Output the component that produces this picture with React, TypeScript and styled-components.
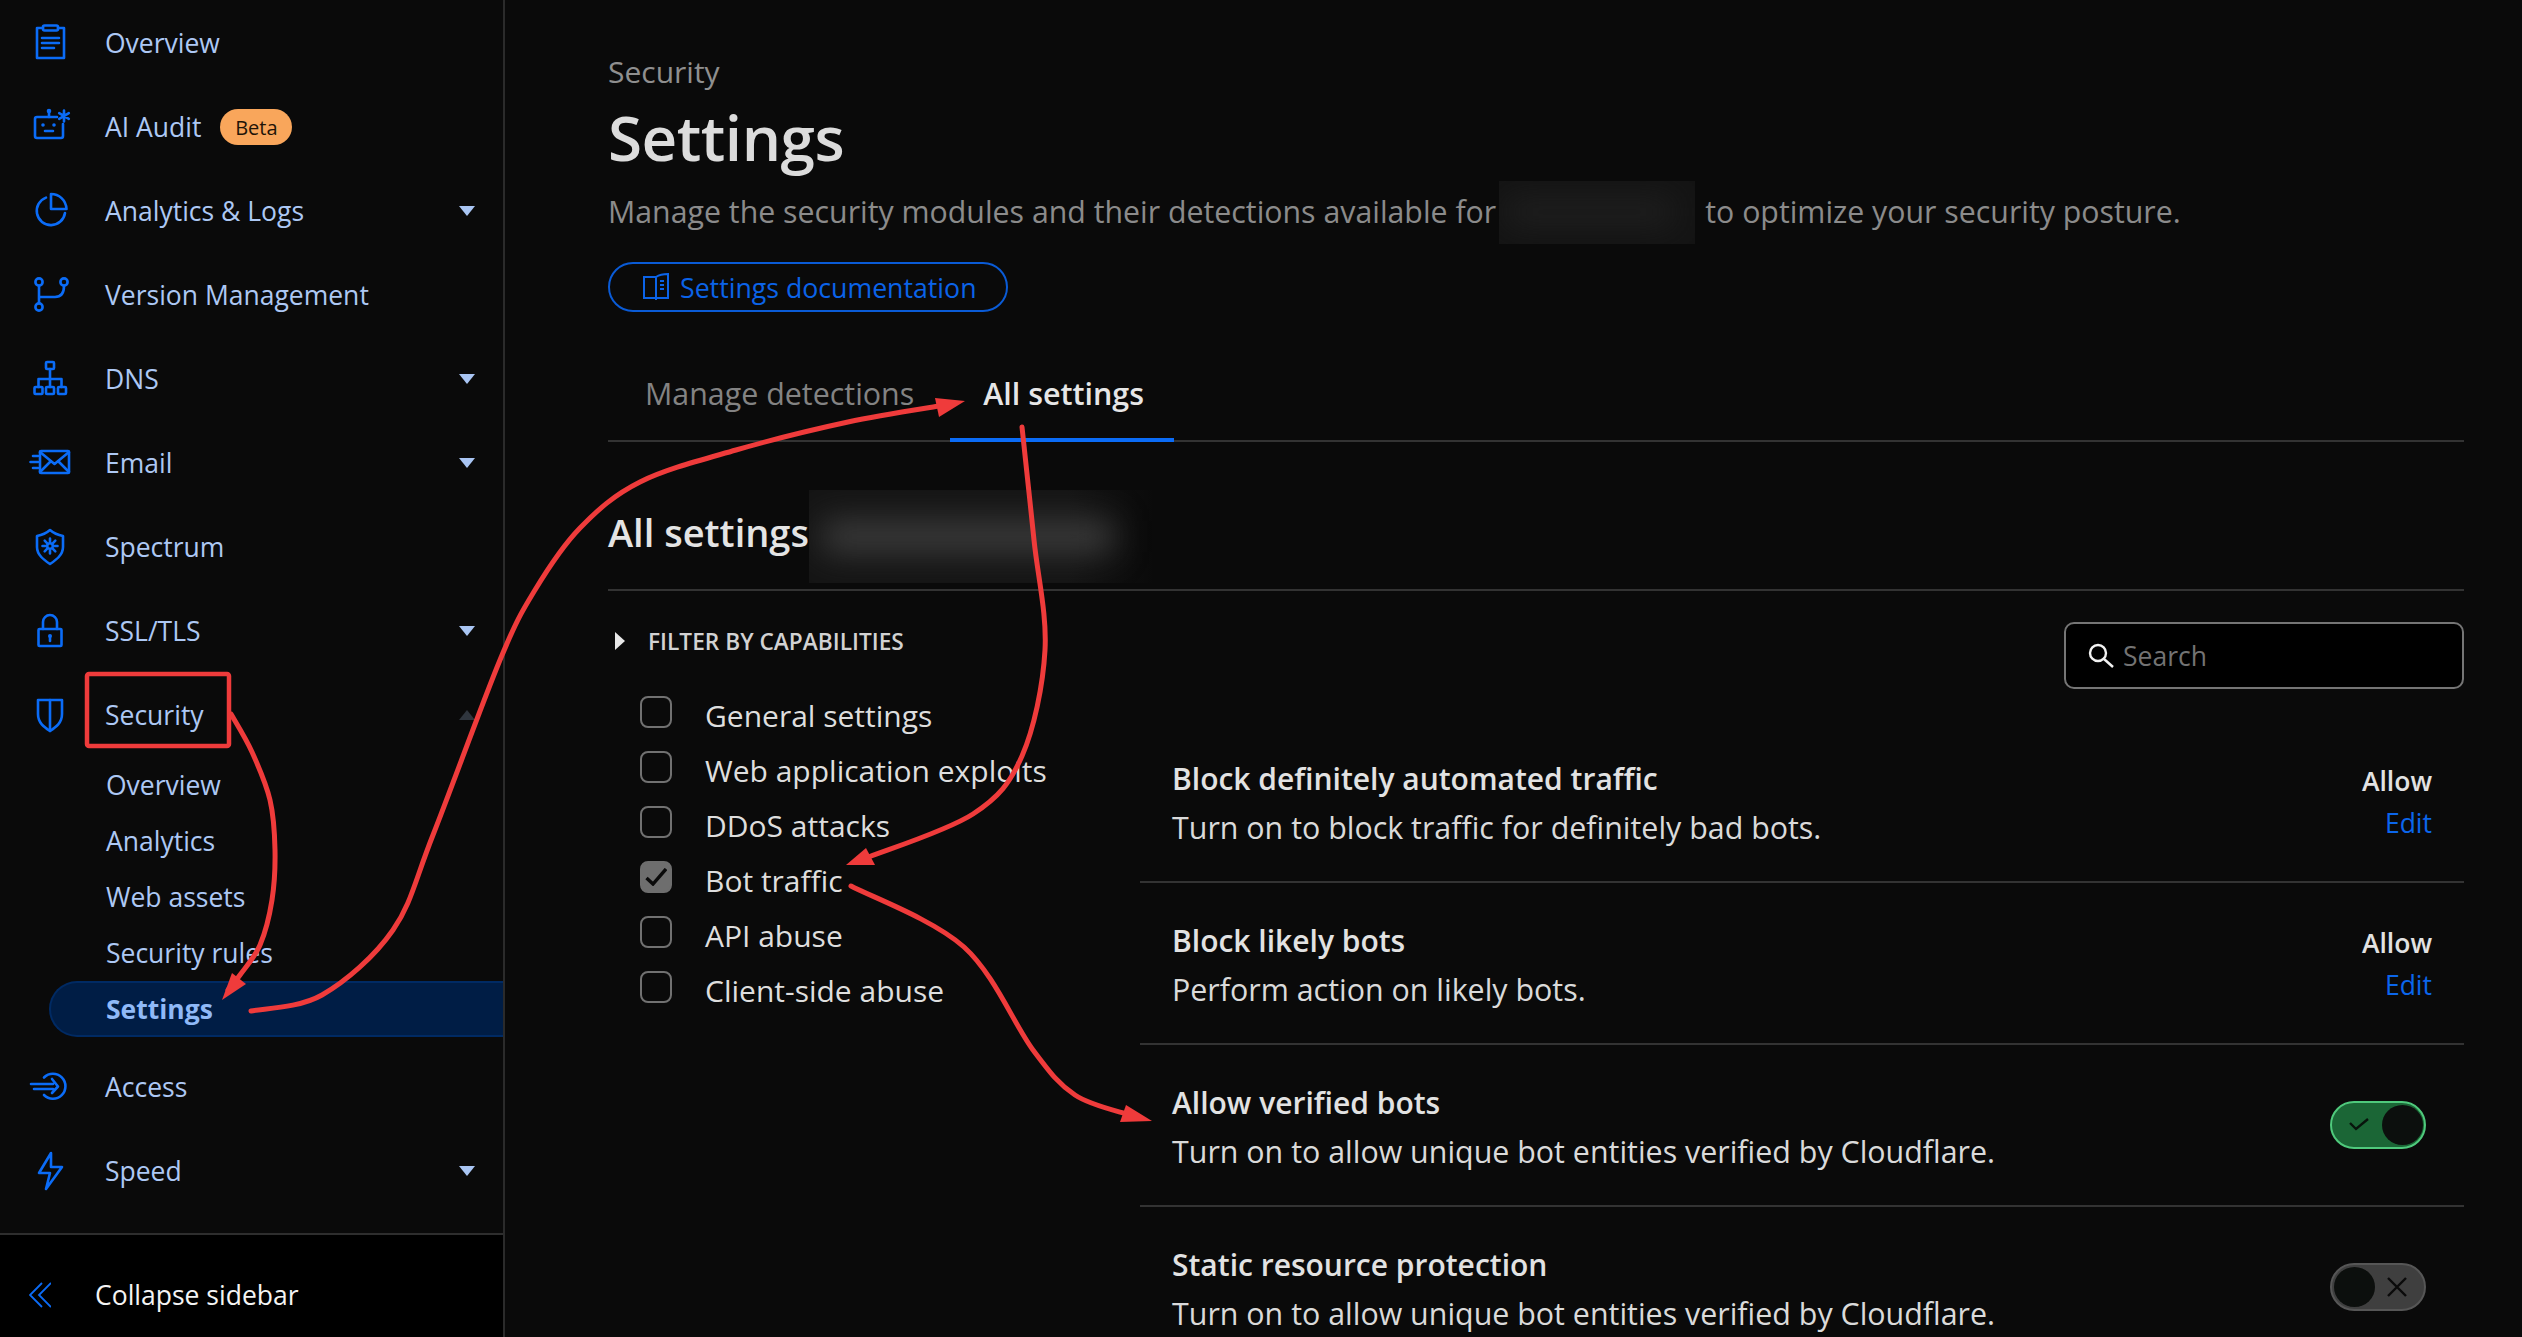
import React from 'react';
import styled, { createGlobalStyle } from 'styled-components';

const Global = createGlobalStyle`
  html, body { margin: 0; padding: 0; background: #0a0a0a; }
  body { font-family: "Open Sans", "Noto Sans", sans-serif; }
  * { box-sizing: border-box; }
`;

const Page = styled.div`
  position: relative;
  width: 2522px;
  height: 1337px;
  display: flex;
  overflow: hidden;
  background: #0a0a0a;
`;

const Sidebar = styled.aside`
  width: 505px;
  flex: none;
  height: 100%;
  display: flex;
  flex-direction: column;
  border-right: 2px solid #2b2b2b;
  background: #0a0a0a;
`;

const NavList = styled.nav`
  flex: 1;
  padding-top: 1px;
  border-bottom: 2px solid #2e2e2e;
`;

const NavRow = styled.div`
  height: 84px;
  display: flex;
  align-items: center;
  color: #adc8f4;
  font-size: 26.5px;
`;

const IconSlot = styled.span`
  width: 40px;
  height: 40px;
  margin-left: 30px;
  margin-right: 35px;
  flex: none;
  color: #0b6cf7;
  display: block;
  svg { display: block; overflow: visible; }
`;

const Badge = styled.span`
  margin-left: 19px;
  width: 72px;
  height: 36px;
  border-radius: 18px;
  background: #f9a65b;
  color: #1f1408;
  font-size: 20px;
  display: flex;
  align-items: center;
  justify-content: center;
`;

const Caret = styled.span<{ $up?: boolean }>`
  margin-left: auto;
  margin-right: 28px;
  width: 0;
  height: 0;
  border-left: 8px solid transparent;
  border-right: 8px solid transparent;
  ${p => p.$up
    ? 'border-bottom: 10px solid #2f353d;'
    : 'border-top: 10px solid #a9c5f3;'}
`;

const SubList = styled.div`
  margin-bottom: 8px;
`;

const SubItem = styled.div<{ $active?: boolean }>`
  height: 56px;
  margin-left: 49px;
  padding-left: 55px;
  display: flex;
  align-items: center;
  font-size: 26.5px;
  color: ${p => (p.$active ? '#8fb9f7' : '#adc8f4')};
  font-weight: ${p => (p.$active ? 700 : 400)};
  background: ${p => (p.$active ? '#001d45' : 'transparent')};
  border: ${p => (p.$active ? '2px solid #002a63' : '2px solid transparent')};
  border-right: none;
  border-radius: ${p => (p.$active ? '28px 0 0 28px' : '0')};
`;

const CollapseBar = styled.div`
  height: 102px;
  flex: none;
  background: #000;
  color: #f4f4f4;
  font-size: 26.5px;
  display: flex;
  align-items: center;
  padding: 18px 0 0 29px;
  gap: 44px;
`;

const Main = styled.main`
  flex: 1;
  min-width: 0;
  padding: 52px 58px 0 103px;
`;

const Crumb = styled.div`
  font-size: 30px;
  line-height: 40px;
  color: #8f8f8f;
`;

const Title = styled.h1`
  margin: 9px 0 0;
  font-size: 62px;
  line-height: 72px;
  font-weight: 600;
  color: #dcdcdc;
  letter-spacing: -0.5px;
`;

const Lead = styled.p`
  margin: 17px 0 0;
  font-size: 30.3px;
  line-height: 44px;
  color: #8b8b8b;
  display: flex;
  align-items: center;
  white-space: nowrap;
`;

const Redacted = styled.span<{ $w: number; $h: number; $base: string; $tone: string }>`
  display: inline-block;
  flex: none;
  position: relative;
  overflow: hidden;
  width: ${p => p.$w}px;
  height: ${p => p.$h}px;
  background: ${p => p.$base};
  &::after {
    content: '';
    position: absolute;
    left: 4%;
    right: 12%;
    top: 32%;
    bottom: 32%;
    background: ${p => p.$tone};
    filter: blur(16px);
  }
`;

const LeadRedacted = styled(Redacted)`
  margin: -10px 10px -10px 3px;
`;

const DocsButton = styled.a`
  margin-top: 28px;
  width: 400px;
  height: 50px;
  border: 2px solid #0a5bd6;
  border-radius: 25px;
  display: flex;
  align-items: center;
  padding-left: 33px;
  gap: 11px;
  color: #0b63e8;
  font-size: 26.7px;
`;

const Tabs = styled.div`
  margin-top: 50px;
  display: flex;
  border-bottom: 2px solid #333;
  height: 80px;
`;

const Tab = styled.div<{ $active?: boolean }>`
  height: 80px;
  display: flex;
  align-items: center;
  padding: 0 30px 14px 33px;
  font-size: 30.4px;
  font-weight: ${p => (p.$active ? 600 : 400)};
  color: ${p => (p.$active ? '#e6e6e6' : '#838383')};
  border-bottom: 4px solid ${p => (p.$active ? '#0b6cf7' : 'transparent')};
  &:first-child { padding-left: 37px; padding-right: 36px; }
`;

const SectionHead = styled.div`
  height: 149px;
  padding: 48px 0 0;
  border-bottom: 2px solid #333;
  display: flex;
  align-items: flex-start;
`;

const SectionTitle = styled.h2`
  margin: 16px 0 0;
  font-size: 38px;
  line-height: 52px;
  font-weight: 600;
  color: #e4e4e4;
  white-space: nowrap;
`;

const Columns = styled.div`
  display: flex;
`;

const FilterCol = styled.div`
  width: 532px;
  flex: none;
  padding-top: 39px;
`;

const FilterHead = styled.div`
  display: flex;
  align-items: center;
  height: 22px;
  color: #d2d2d2;
  font-size: 22.7px;
  font-weight: 600;
  text-transform: uppercase;
  padding-left: 7px;
`;

const FilterArrow = styled.span`
  width: 0;
  height: 0;
  border-top: 9px solid transparent;
  border-bottom: 9px solid transparent;
  border-left: 10px solid #e8e8e8;
  margin-right: 23px;
`;

const CheckList = styled.div`
  margin-top: 44px;
  padding-left: 32px;
  display: flex;
  flex-direction: column;
`;

const CheckRow = styled.label`
  height: 55px;
  display: flex;
  align-items: flex-start;
  gap: 33px;
  color: #dedede;
  font-size: 30px;
  line-height: 40px;
`;

const Box = styled.span<{ $on?: boolean }>`
  width: 32px;
  height: 32px;
  flex: none;
  border-radius: 8px;
  border: 2px solid ${p => (p.$on ? '#6e6e6e' : '#717171')};
  background: ${p => (p.$on ? '#6e6e6e' : 'transparent')};
  display: flex;
  align-items: center;
  justify-content: center;
`;

const ListCol = styled.div`
  flex: 1;
  min-width: 0;
`;

const SearchRow = styled.div`
  display: flex;
  justify-content: flex-end;
  padding-top: 31px;
  height: 130px;
`;

const SearchBox = styled.div`
  width: 400px;
  height: 67px;
  background: #000;
  border: 2px solid #757575;
  border-radius: 10px;
  display: flex;
  align-items: center;
  padding-left: 21px;
  gap: 8px;
  color: #737373;
  font-size: 26.5px;
`;

const SettingRow = styled.div`
  height: 162px;
  border-bottom: 2px solid #333;
  padding: 0 32px;
  display: flex;
  align-items: center;
  justify-content: space-between;
`;

const SettingText = styled.div`
  display: flex;
  flex-direction: column;
  gap: 7px;
  margin-top: 5px;
`;

const SettingTitle = styled.div`
  font-size: 30px;
  line-height: 42px;
  font-weight: 600;
  color: #e2e2e2;
`;

const SettingDesc = styled.div`
  font-size: 30.4px;
  line-height: 42px;
  color: #dadada;
`;

const ActionCol = styled.div`
  display: flex;
  flex-direction: column;
  align-items: flex-end;
  gap: 6px;
  margin-top: 2px;
  font-size: 26.5px;
  line-height: 36px;
`;

const ActionValue = styled.span`
  font-weight: 600;
  color: #e2e2e2;
`;

const ActionLink = styled.a`
  color: #0b66ec;
`;

const Toggle = styled.span<{ $on?: boolean }>`
  width: 96px;
  height: 48px;
  margin-right: 6px;
  flex: none;
  position: relative;
  border-radius: 24px;
  background: ${p => (p.$on ? '#1b6636' : '#3f3f3f')};
  border: 2px solid ${p => (p.$on ? '#4fc97c' : '#565656')};
  display: block;
  svg { position: absolute; top: 11px; left: ${p => (p.$on ? '16px' : '54px')}; }
`;

const Knob = styled.span<{ $on?: boolean }>`
  position: absolute;
  top: 2px;
  ${p => (p.$on ? 'right: 1px;' : 'left: 2px;')}
  width: 41px;
  height: 40px;
  border-radius: 50%;
  background: #0c0f0d;
`;

const Annotations = styled.svg`
  position: absolute;
  left: 0;
  top: 0;
  width: 2522px;
  height: 1337px;
  pointer-events: none;
`;

const S = { fill: 'none', stroke: 'currentColor', strokeWidth: 2.6, strokeLinecap: 'round' as const, strokeLinejoin: 'round' as const };

const Svg = ({ children }: { children: React.ReactNode }) => (
  <svg width="40" height="40" viewBox="0 0 40 40" {...S}>{children}</svg>
);

const icons: Record<string, React.ReactNode> = {
  overview: <Svg><path d="M13 5H7v30h27V5h-6" /><rect x="13" y="2.5" width="15" height="5" rx="1.5" /><path d="M12 15h17M12 20h17M12 25h12" /></Svg>,
  audit: <Svg><path d="M27 10H7a2 2 0 0 0-2 2v17a2 2 0 0 0 2 2h24a2 2 0 0 0 2-2V17" /><circle cx="19" cy="4" r="2.3" fill="currentColor" stroke="none" /><path d="M19 5v5M15 24h8" /><circle cx="13" cy="18" r="1.8" fill="currentColor" stroke="none" /><circle cx="24" cy="18" r="1.8" fill="currentColor" stroke="none" /><path d="M34 3.5v11M29.2 6.2l9.6 5.6M38.8 6.2l-9.6 5.6" /></Svg>,
  analytics: <Svg><path d="M16 6.6A14.2 14.2 0 1 0 35 22" /><path d="M21 3c8 0 15 6 15.5 15H21z" /></Svg>,
  version: <Svg><circle cx="9" cy="7" r="3.6" /><circle cx="9" cy="32" r="3.6" /><circle cx="34" cy="7" r="3.6" /><path d="M9 11v17M9 22h16c6 0 9-4 9-11" /></Svg>,
  dns: <Svg><rect x="16" y="3" width="8" height="7" rx="1" /><rect x="4.5" y="28" width="8" height="7" rx="1" /><rect x="16" y="28" width="8" height="7" rx="1" /><rect x="28" y="28" width="8" height="7" rx="1" /><path d="M20 10v18M8.5 28v-8h23v8" /></Svg>,
  email: <Svg><rect x="10" y="8" width="29" height="22" rx="1" /><path d="M10 9l14.5 12L39 9M10 29l10-10M39 29L29 19M3 13h5M0.5 19H8M3 25h5" /></Svg>,
  spectrum: <Svg><path d="M20 3c3.5 3 8 5 13 6v11c0 8-7 13-13 17C14 33 7 28 7 20V9c5-1 9.5-3 13-6z" /><circle cx="20" cy="19" r="2.8" /><path d="M20 11.5v3M20 23.5v3M12.5 19h3M24.5 19h3M14.7 13.7l2.1 2.1M23.2 22.2l2.1 2.1M25.3 13.7l-2.1 2.1M16.8 22.2l-2.1 2.1" /></Svg>,
  ssl: <Svg><rect x="8.5" y="18" width="23" height="17" rx="1" /><path d="M13 18v-7a7 7 0 0 1 14 0v7" /><circle cx="20" cy="25" r="2" fill="currentColor" stroke="none" /><path d="M20 26v4" /></Svg>,
  security: <Svg><path d="M8 5h24v14c0 9-6 13-12 17C14 32 8 28 8 19z" /><path d="M20 5v31" /></Svg>,
  access: <Svg><path d="M14 10.5A12.5 12.5 0 1 1 14 28" /><path d="M1 17h22M4 22h19M22 12l6 7.5-6 6.5" /></Svg>,
  speed: <Svg><path d="M21 2L9 22h11l-4 16 16-22H21z" /></Svg>,
};

type Item = { label: string; icon: string; caret?: boolean; badge?: string };

const top: Item[] = [
  { label: 'Overview', icon: 'overview' },
  { label: 'AI Audit', icon: 'audit', badge: 'Beta' },
  { label: 'Analytics & Logs', icon: 'analytics', caret: true },
  { label: 'Version Management', icon: 'version' },
  { label: 'DNS', icon: 'dns', caret: true },
  { label: 'Email', icon: 'email', caret: true },
  { label: 'Spectrum', icon: 'spectrum' },
  { label: 'SSL/TLS', icon: 'ssl', caret: true },
];

const subs = ['Overview', 'Analytics', 'Web assets', 'Security rules', 'Settings'];
const filters = ['General settings', 'Web application exploits', 'DDoS attacks', 'Bot traffic', 'API abuse', 'Client-side abuse'];
const verified = 'Turn on to allow unique bot entities verified by Cloudflare.';

const renderRow = (it: Item) => (
  <NavRow key={it.label}>
    <IconSlot>{icons[it.icon]}</IconSlot>
    {it.label}
    {it.badge && <Badge>{it.badge}</Badge>}
    {it.caret && <Caret />}
  </NavRow>
);

const red = '#ef3b3b';

// Catmull-Rom spline through the hand-read points of a drawn arrow.
const smooth = (p: number[][]) => {
  let d = `M${p[0][0]} ${p[0][1]}`;
  for (let i = 0; i < p.length - 1; i++) {
    const a = p[Math.max(i - 1, 0)], b = p[i], c = p[i + 1], e = p[Math.min(i + 2, p.length - 1)];
    d += `C${b[0] + (c[0] - a[0]) / 6} ${b[1] + (c[1] - a[1]) / 6} ${c[0] - (e[0] - b[0]) / 6} ${c[1] - (e[1] - b[1]) / 6} ${c[0]} ${c[1]}`;
  }
  return d;
};

const arrows = [
  [[231, 714], [252, 752], [270, 800], [275, 850], [272, 900], [260, 945], [240, 975], [228, 990]],
  [[251, 1011], [322, 995], [393, 930], [433, 835], [500, 660], [535, 590], [580, 528], [640, 482], [736, 450], [848, 422], [945, 405]],
  [[1022, 427], [1034, 540], [1045, 650], [1022, 756], [973, 814], [866, 858]],
  [[851, 886], [964, 947], [1033, 1050], [1075, 1095], [1130, 1115]],
];

export default function App() {
  return (
    <Page>
      <Global />
      <Sidebar>
        <NavList>
          {top.map(renderRow)}
          <NavRow>
            <IconSlot>{icons.security}</IconSlot>
            Security
            <Caret $up />
          </NavRow>
          <SubList>
            {subs.map(s => <SubItem key={s} $active={s === 'Settings'}>{s}</SubItem>)}
          </SubList>
          {renderRow({ label: 'Access', icon: 'access' })}
          {renderRow({ label: 'Speed', icon: 'speed', caret: true })}
        </NavList>
        <CollapseBar>
          <svg width="22" height="26" viewBox="0 0 22 26" fill="none" stroke="#0b6cf7" strokeWidth="1.8"><path d="M13 1L1 13l12 12M22 1L10 13l12 12" /></svg>
          Collapse sidebar
        </CollapseBar>
      </Sidebar>
      <Main>
        <Crumb>Security</Crumb>
        <Title>Settings</Title>
        <Lead>
          Manage the security modules and their detections available for
          <LeadRedacted $w={196} $h={63} $base="#141414" $tone="#222222" />
          to optimize your security posture.
        </Lead>
        <DocsButton>
          <svg width="26" height="28" viewBox="0 0 26 28" fill="none" stroke="currentColor" strokeWidth="2"><path d="M13 4H1v21h12zM13 4c3-2 8-3 12-3v24H13M17 8h4M17 12h4M17 16h4M13 25v2" /></svg>
          Settings documentation
        </DocsButton>
        <Tabs>
          <Tab>Manage detections</Tab>
          <Tab $active>All settings</Tab>
        </Tabs>
        <SectionHead>
          <SectionTitle>All settings</SectionTitle>
          <Redacted $w={345} $h={93} $base="linear-gradient(90deg, #151515 75%, #0a0a0a)" $tone="#3c3c3c" />
        </SectionHead>
        <Columns>
          <FilterCol>
            <FilterHead><FilterArrow />Filter by capabilities</FilterHead>
            <CheckList>
              {filters.map(f => (
                <CheckRow key={f}>
                  <Box $on={f === 'Bot traffic'}>
                    {f === 'Bot traffic' && <svg width="22" height="18" viewBox="0 0 22 18" fill="none" stroke="#0a0a0a" strokeWidth="3.4"><path d="M1.5 10L8 16L21 1" /></svg>}
                  </Box>
                  <span>{f}</span>
                </CheckRow>
              ))}
            </CheckList>
          </FilterCol>
          <ListCol>
            <SearchRow>
              <SearchBox>
                <svg width="28" height="26" viewBox="0 0 28 26" fill="none" stroke="#f2f2f2" strokeWidth="2.4"><circle cx="11" cy="10" r="8" /><path d="M17 16l9 8" /></svg>
                Search
              </SearchBox>
            </SearchRow>
            <SettingRow>
              <SettingText>
                <SettingTitle>Block definitely automated traffic</SettingTitle>
                <SettingDesc>Turn on to block traffic for definitely bad bots.</SettingDesc>
              </SettingText>
              <ActionCol><ActionValue>Allow</ActionValue><ActionLink>Edit</ActionLink></ActionCol>
            </SettingRow>
            <SettingRow>
              <SettingText>
                <SettingTitle>Block likely bots</SettingTitle>
                <SettingDesc>Perform action on likely bots.</SettingDesc>
              </SettingText>
              <ActionCol><ActionValue>Allow</ActionValue><ActionLink>Edit</ActionLink></ActionCol>
            </SettingRow>
            <SettingRow>
              <SettingText>
                <SettingTitle>Allow verified bots</SettingTitle>
                <SettingDesc>{verified}</SettingDesc>
              </SettingText>
              <Toggle $on>
                <svg width="22" height="20" viewBox="0 0 22 20" fill="none" stroke="#08140c" strokeWidth="2.4"><path d="M2 9l6 6L20 5" /></svg>
                <Knob $on />
              </Toggle>
            </SettingRow>
            <SettingRow>
              <SettingText>
                <SettingTitle>Static resource protection</SettingTitle>
                <SettingDesc>{verified}</SettingDesc>
              </SettingText>
              <Toggle>
                <svg width="22" height="22" viewBox="0 0 22 22" fill="none" stroke="#0a0a0a" strokeWidth="2.4"><path d="M2 2l18 18M20 2L2 20" /></svg>
                <Knob />
              </Toggle>
            </SettingRow>
          </ListCol>
        </Columns>
      </Main>
      <Annotations viewBox="0 0 2522 1337" fill="none">
        <rect x="87" y="674" width="142" height="72" rx="2" stroke={red} strokeWidth="4.5" />
        <g stroke={red} strokeWidth="5" strokeLinecap="round">
          {arrows.map(a => <path key={a[0][0]} d={smooth(a)} />)}
        </g>
        <g fill={red}>
          <path d="M222 1000L232 973L246 984z" />
          <path d="M965 401L935 398L939 417z" />
          <path d="M846 865L866 848L875 865z" />
          <path d="M1152 1121L1126 1105L1120 1122z" />
        </g>
      </Annotations>
    </Page>
  );
}
